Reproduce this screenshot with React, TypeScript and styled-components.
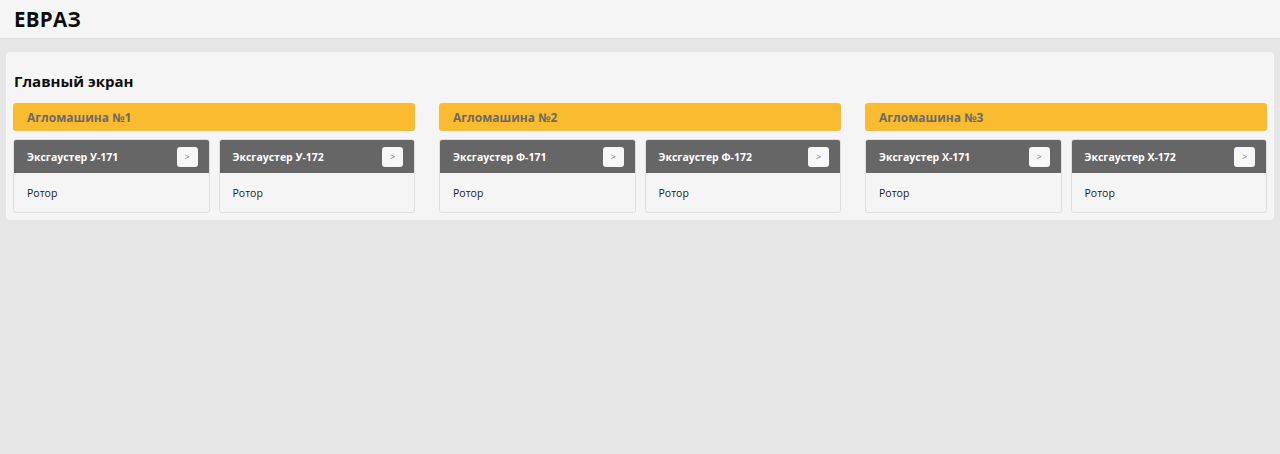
import React from "react";
import styled, { createGlobalStyle } from "styled-components";

const Global = createGlobalStyle`
  html, body { margin: 0; padding: 0; background: #e6e6e6; }
  body { font-family: "Open Sans", "Noto Sans", sans-serif; color: #111; }
  * { box-sizing: border-box; }
`;

const Header = styled.header`
  height: 39px;
  background: #f5f5f5;
  border-bottom: 1px solid #dcdcdc;
  display: flex;
  align-items: center;
  padding: 0 14px;
`;

const Logo = styled.h1`
  margin: 0;
  font-size: 20.5px;
  font-weight: 700;
  letter-spacing: 0.3px;
  color: #0d0d0d;
`;

const Main = styled.main`
  padding: 13px 6px;
`;

const Panel = styled.section`
  background: #f5f5f5;
  border-radius: 4px;
  padding: 18px 7px 7px;
`;

const Title = styled.h2`
  margin: 0 0 11px 1px;
  font-size: 15px;
  font-weight: 700;
  line-height: 22px;
  color: #0d0d0d;
`;

const Groups = styled.div`
  display: grid;
  grid-template-columns: repeat(3, 1fr);
  gap: 24px;
`;

const Group = styled.div`
  display: flex;
  flex-direction: column;
  gap: 8px;
`;

const GroupBar = styled.div`
  height: 28px;
  background: #fbbb30;
  border-radius: 3px;
  display: flex;
  align-items: center;
  padding: 0 14px;
  font-size: 12px;
  font-weight: 700;
  color: #6e6a62;
`;

const Cards = styled.div`
  display: grid;
  grid-template-columns: 1fr 1fr;
  gap: 9px;
`;

const Card = styled.div`
  border: 1px solid #dedede;
  border-radius: 3px;
  background: #f5f5f5;
  overflow: hidden;
`;

const CardHead = styled.div`
  height: 33px;
  background: #666666;
  display: flex;
  align-items: center;
  justify-content: space-between;
  padding: 0 11px 0 13px;
  color: #fff;
  font-size: 10.5px;
  font-weight: 700;
`;

const GoButton = styled.button`
  width: 21px;
  height: 20px;
  border: none;
  border-radius: 3px;
  background: #f7f7f7;
  color: #777;
  font-size: 9px;
  font-family: inherit;
  padding: 0;
  cursor: pointer;
`;

const CardBody = styled.div`
  height: 39px;
  display: flex;
  align-items: center;
  padding: 1px 13px 0;
  font-size: 10.5px;
  color: #1a1a1a;
`;

const groups = [
  { name: "Агломашина №1", items: ["Эксгаустер У-171", "Эксгаустер У-172"] },
  { name: "Агломашина №2", items: ["Эксгаустер Ф-171", "Эксгаустер Ф-172"] },
  { name: "Агломашина №3", items: ["Эксгаустер Х-171", "Эксгаустер Х-172"] },
];

export default function App() {
  return (
    <>
      <Global />
      <Header>
        <Logo>ЕВРАЗ</Logo>
      </Header>
      <Main>
        <Panel>
          <Title>Главный экран</Title>
          <Groups>
            {groups.map((g) => (
              <Group key={g.name}>
                <GroupBar>{g.name}</GroupBar>
                <Cards>
                  {g.items.map((it) => (
                    <Card key={it}>
                      <CardHead>
                        <span>{it}</span>
                        <GoButton>&gt;</GoButton>
                      </CardHead>
                      <CardBody>Ротор</CardBody>
                    </Card>
                  ))}
                </Cards>
              </Group>
            ))}
          </Groups>
        </Panel>
      </Main>
    </>
  );
}
